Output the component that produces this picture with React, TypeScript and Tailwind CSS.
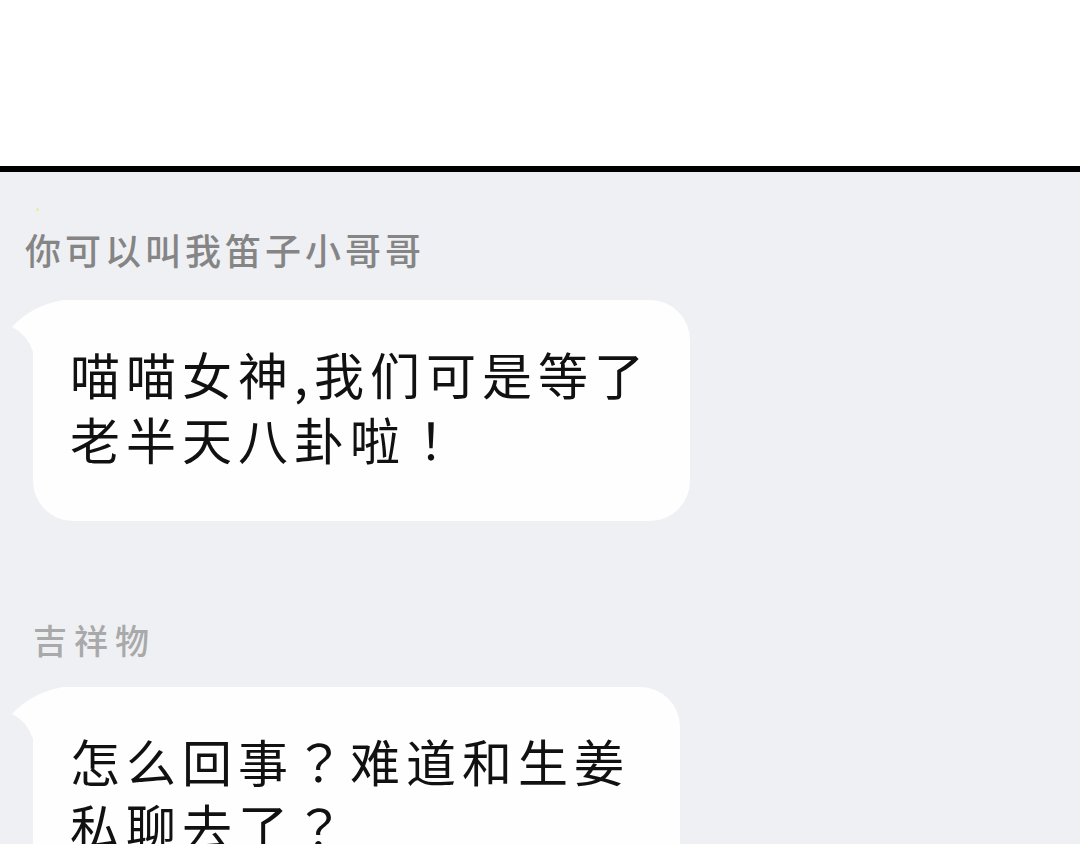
import React from "react";

const cjk = { fontFamily: '"Noto Sans CJK SC", "Noto Sans", sans-serif' };
// full-width punctuation sits centred in the TC face
const punct = { fontFamily: '"Noto Sans CJK TC", "Noto Sans CJK SC", sans-serif' };

const BubbleTail = () => (
  <svg
    className="absolute left-[-22px] top-0"
    width="60"
    height="60"
    viewBox="0 0 60 60"
  >
    <path d="M1 27 Q 20 6 52 0 L 60 0 L 60 60 L 22 60 L 22 52 Q 16 34 1 27 Z" fill="#fefefe" />
  </svg>
);

const renderLine = (line: string) =>
  line.split(/([？！])/).map((part, i) =>
    part === "？" || part === "！" ? (
      <span key={i} style={punct}>
        {part}
      </span>
    ) : (
      <React.Fragment key={i}>{part}</React.Fragment>
    )
  );

interface MessageProps {
  name: string;
  nameClass: string;
  lines: string[];
  width: string;
}

const Message = ({ name, nameClass, lines, width }: MessageProps) => (
  <div className="flex shrink-0 flex-col">
    <div className={nameClass} style={cjk}>
      {name}
    </div>
    <div className={`relative ml-[33px] rounded-[40px] bg-[#fefefe] pl-[37px] pt-[41px] pb-[50px] ${width}`}>
      <BubbleTail />
      {lines.map((line) => (
        <div
          key={line}
          className="relative whitespace-nowrap text-[50px] leading-[65px] tracking-[6px] text-[#111]"
          style={cjk}
        >
          {renderLine(line)}
        </div>
      ))}
    </div>
  </div>
);

export default function App() {
  return (
    <div className="flex h-[844px] w-[1080px] flex-col overflow-hidden bg-white">
      <div className="h-[166px] shrink-0 bg-white" />
      <div className="h-[6px] shrink-0 bg-black" />
      <div className="flex flex-1 flex-col bg-[#eff0f4] pt-[36px]">
        <div className="ml-[36px] h-[3px] w-[3px] shrink-0 rounded-full bg-[#e6ef9a]" />
        <Message
          name="你可以叫我笛子小哥哥"
          nameClass="ml-[25px] mt-[14px] mb-[27px] text-[36px] font-medium leading-[48px] tracking-[4px] text-[#858585]"
          lines={["喵喵女神,我们可是等了", "老半天八卦啦！"]}
          width="w-[657px]"
        />
        <div className="mt-[96px] shrink-0">
          <Message
            name="吉祥物"
            nameClass="ml-[33px] mb-[24px] text-[34px] font-medium leading-[46px] tracking-[7px] text-[#a9a9a9]"
            lines={["怎么回事？难道和生姜", "私聊去了？"]}
            width="w-[647px]"
          />
        </div>
      </div>
    </div>
  );
}
